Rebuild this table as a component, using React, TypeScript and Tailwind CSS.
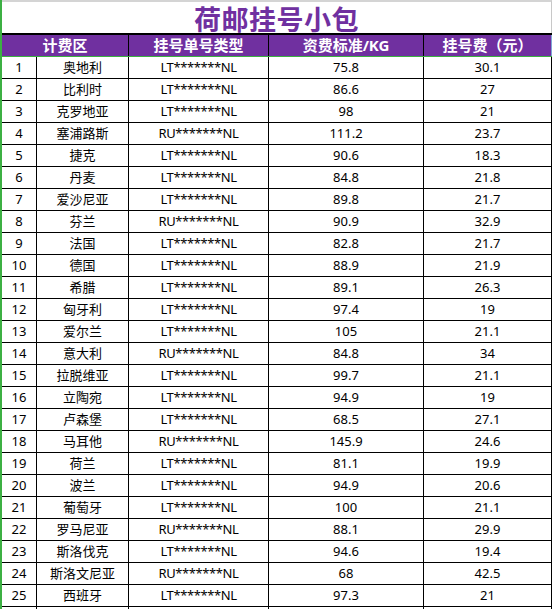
const rows: [string, string, string, string][] = [
  ["奥地利", "LT", "75.8", "30.1"],
  ["比利时", "LT", "86.6", "27"],
  ["克罗地亚", "LT", "98", "21"],
  ["塞浦路斯", "RU", "111.2", "23.7"],
  ["捷克", "LT", "90.6", "18.3"],
  ["丹麦", "LT", "84.8", "21.8"],
  ["爱沙尼亚", "LT", "89.8", "21.7"],
  ["芬兰", "RU", "90.9", "32.9"],
  ["法国", "LT", "82.8", "21.7"],
  ["德国", "LT", "88.9", "21.9"],
  ["希腊", "LT", "89.1", "26.3"],
  ["匈牙利", "LT", "97.4", "19"],
  ["爱尔兰", "LT", "105", "21.1"],
  ["意大利", "RU", "84.8", "34"],
  ["拉脱维亚", "LT", "99.7", "21.1"],
  ["立陶宛", "LT", "94.9", "19"],
  ["卢森堡", "LT", "68.5", "27.1"],
  ["马耳他", "RU", "145.9", "24.6"],
  ["荷兰", "LT", "81.1", "19.9"],
  ["波兰", "LT", "94.9", "20.6"],
  ["葡萄牙", "LT", "100", "21.1"],
  ["罗马尼亚", "RU", "88.1", "29.9"],
  ["斯洛伐克", "LT", "94.6", "19.4"],
  ["斯洛文尼亚", "RU", "68", "42.5"],
  ["西班牙", "LT", "97.3", "21"],
]

const cols = "grid grid-cols-[35px_92px_140px_155px_128px]"
const cell = "flex items-center justify-center border-r border-b border-black"
const head = "flex items-center justify-center text-white font-bold text-[15px] leading-none"

export default function App() {
  return (
    <div className="w-[555px] h-[609px] overflow-hidden bg-white text-black font-['Noto_Sans','Noto_Sans_CJK_SC',sans-serif]">
      <div className="w-[552px] border-l-2 border-[#3cb043]">
        {/* Title */}
        <div className="h-[33px] border-t-2 border-[#d4d4d4] border-r border-r-[#c8c8c8] flex items-center justify-center pt-[3px]">
          <span className="text-[27px] font-bold leading-none text-[#7030a0] tracking-[0.5px]">
            荷邮挂号小包
          </span>
        </div>

        {/* Header */}
        <div className={`${cols} h-[24px] bg-[#7030a0] border-t-2 border-black border-b border-b-[#3cb043]`}>
          <div className={`${head} col-span-2 border-r border-black`}>计费区</div>
          <div className={`${head} border-r border-black`}>挂号单号类型</div>
          <div className={`${head} border-r border-black`}>资费标准/KG</div>
          <div className={`${head} border-r border-[#7fa7d6]`}>挂号费（元）</div>
        </div>

        {/* Rows */}
        {rows.map((r, i) => (
          <div key={i} className={`${cols} h-[22px] text-[13px] leading-none`}>
            <div className={cell}>{i + 1}</div>
            <div className={cell}>{r[0]}</div>
            <div className={`${cell} tracking-[-0.4px]`}>{r[1]}*******NL</div>
            <div className={cell}>{r[2]}</div>
            <div className={cell}>{r[3]}</div>
          </div>
        ))}
        <div className={`${cols} h-[22px]`}>
          <div className="border-r border-black" />
          <div className="border-r border-black" />
          <div className="border-r border-black" />
          <div className="border-r border-black" />
          <div className="border-r border-black" />
        </div>
      </div>
    </div>
  )
}
